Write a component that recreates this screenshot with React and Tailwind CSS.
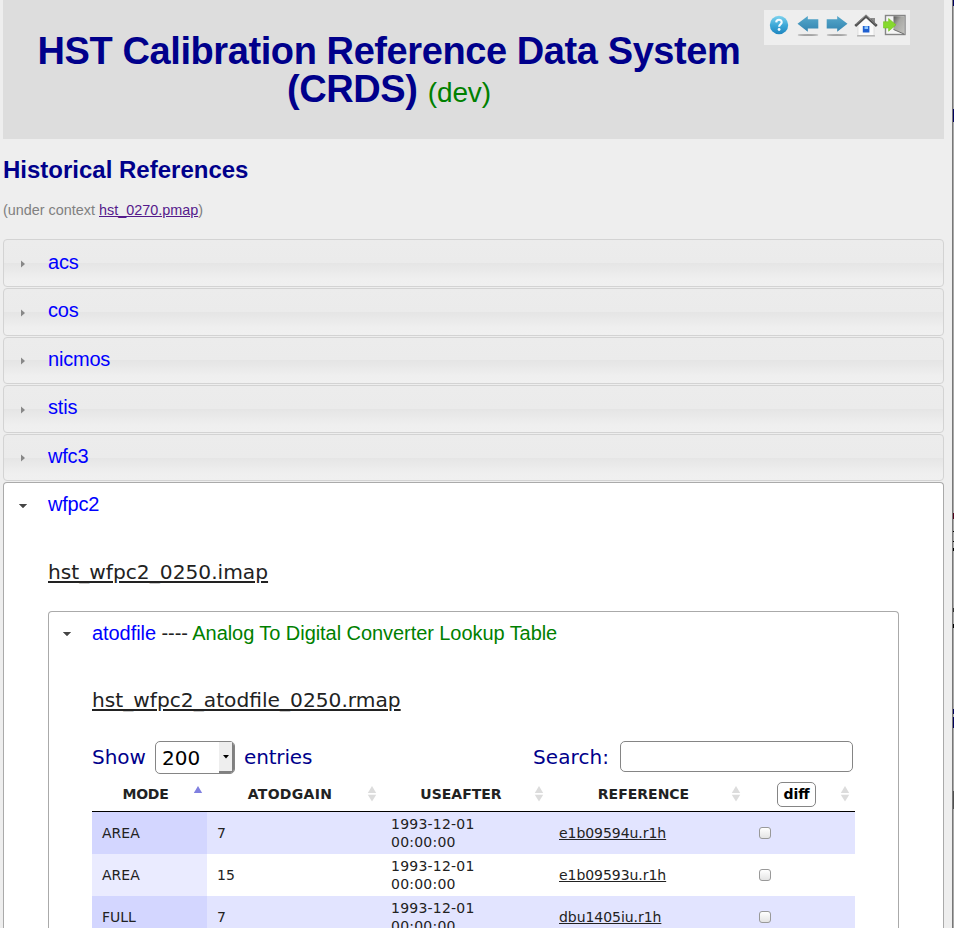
import React from 'react';

const instruments = [
  { name: 'acs', box: 'h-[48px] mb-px', icon: 'mt-[20px]', text: 'mt-[11px]' },
  { name: 'cos', box: 'h-[48px] mb-px', icon: 'mt-[20px]', text: 'mt-[10px]' },
  { name: 'nicmos', box: 'h-[47px] mb-px', icon: 'mt-[19px]', text: 'mt-[10px]' },
  { name: 'stis', box: 'h-[48px] mb-px', icon: 'mt-[20px]', text: 'mt-[10px]' },
  { name: 'wfc3', box: 'h-[47px] mb-px', icon: 'mt-[19px]', text: 'mt-[10px]' },
];

const rows = [
  { mode: 'AREA', gain: '7', file: 'e1b09594u.r1h' },
  { mode: 'AREA', gain: '15', file: 'e1b09593u.r1h' },
  { mode: 'FULL', gain: '7', file: 'dbu1405iu.r1h' },
];

const helv = "font-['Liberation_Sans',Arial,sans-serif]";
const verd = "font-['DejaVu_Sans',Verdana,sans-serif]";

function HelpIcon() {
  return (
    <svg width="20" height="20" viewBox="0 0 20 20">
      <defs>
        <linearGradient id="help" x1="0" y1="0" x2="0" y2="1">
          <stop offset="0" stopColor="#7fd3ee" />
          <stop offset=".5" stopColor="#3fa9d8" />
          <stop offset="1" stopColor="#1f86c0" />
        </linearGradient>
      </defs>
      <circle cx="10" cy="10" r="9.2" fill="url(#help)" />
      <path d="M7.2 7.4C7.3 3.9 12.7 3.9 12.7 7.2C12.7 9.2 10.2 9.2 10.1 11.8" fill="none" stroke="#f4fbff" strokeWidth="2.1" />
      <circle cx="10.1" cy="14.5" r="1.4" fill="#f4fbff" />
    </svg>
  );
}

function ArrowIcon({ flip }) {
  return (
    <svg width="22" height="22" viewBox="0 0 22 22" className={flip ? '-scale-x-100' : ''}>
      <defs>
        <linearGradient id="arrow" x1="0" y1="0" x2="0" y2="1">
          <stop offset="0" stopColor="#56a8cb" />
          <stop offset="1" stopColor="#3384b0" />
        </linearGradient>
      </defs>
      <path d="M.5 8.8L10.8 1V4.2H21.3V13.5H10.8V16.8Z" fill="url(#arrow)" />
      <ellipse cx="11" cy="20" rx="10.3" ry="1" fill="#a4a4a4" />
    </svg>
  );
}

function HomeIcon() {
  return (
    <svg width="24" height="23" viewBox="0 0 24 23">
      <rect x="16.5" y="4" width="4.5" height="5" fill="#8a8a8a" />
      <path d="M4 11L12 3.5L20 11V21.5H4Z" fill="#fafafa" stroke="#d5d5d5" strokeWidth=".7" />
      <path d="M3 21.9H21" stroke="#8a8a8a" strokeWidth=".8" />
      <path d="M1.2 12L12 2.2L22.8 12" fill="none" stroke="#505050" strokeWidth="2.6" />
      <path d="M1.8 10.4L12 1.3L22 10.4" fill="none" stroke="#9a9a9a" strokeWidth=".8" />
      <rect x="8.8" y="12" width="6.6" height="6.5" fill="#1f5fd0" />
      <path d="M10.5 12.3H14V15H10.5Z" fill="#8cc8ff" />
    </svg>
  );
}

function ExitIcon() {
  return (
    <svg width="23" height="22" viewBox="0 0 23 22">
      <defs>
        <linearGradient id="door" x1="0" y1="0" x2="1" y2="1">
          <stop offset="0" stopColor="#555" />
          <stop offset=".4" stopColor="#a8a8a4" />
          <stop offset="1" stopColor="#c2c2be" />
        </linearGradient>
      </defs>
      <rect x="2.5" y="1.5" width="19.5" height="19" fill="#f5f5f5" stroke="#858585" strokeWidth="1.4" />
      <path d="M10.5 2.2H21.3V20L10.5 15.5Z" fill="url(#door)" />
      <path d="M10.5 15.5L21 20" stroke="#555" strokeWidth=".8" />
      <path d="M.5 7.7H5.6V4.5L13 10.8L5.6 17.2V14H.5Z" fill="#86d92e" stroke="#73c51f" strokeWidth=".6" />
    </svg>
  );
}

function Triangle({ open }) {
  return open ? (
    <svg width="8" height="4" viewBox="0 0 8 4"><path d="M.3 0H7.7V1H6.7V2H5.7V3H4.7V4H3.3V3H2.3V2H1.3V1H.3Z" fill="#454545" /></svg>
  ) : (
    <svg width="4" height="8" viewBox="0 0 4 8"><path d="M0 .5L4 4L0 7.5Z" fill="#888" /></svg>
  );
}

function SortIcon({ active }) {
  return (
    <svg width="10" height="16" viewBox="0 0 10 16" className="block shrink-0">
      <path d="M5 0L9.2 7H.8Z" fill={active ? '#8080e0' : '#dcdcdc'} />
      {!active && <path d="M.8 8.8H9.2L5 15.5Z" fill="#dcdcdc" />}
    </svg>
  );
}

const cols = 'grid grid-cols-[115px_174px_168px_197px_109px]';

export default function App() {
  return (
    <div className={`flex h-[928px] w-[954px] overflow-hidden bg-[#eee] ${helv}`}>
      <div className="ml-[3px] flex h-[928px] w-[941px] shrink-0 flex-col">
        <header className="flex h-[139px] shrink-0 bg-[#ddd]">
          <h1 className="w-[761px] whitespace-nowrap pl-[11px] pt-[32px] text-center text-[38px] font-bold leading-[38px] text-[#00008b]">
            <div className="tracking-[-0.41px]">HST Calibration Reference Data System</div>
            <div className="tracking-[-0.41px]">(CRDS) <span className="text-[28px] font-normal tracking-[-0.1px] text-[#008000]">(dev)</span></div>
          </h1>
          <nav className="mt-[10px] flex h-[35px] w-[146px] bg-[#eee]">
            <span className="ml-[5px] mt-[5px]"><HelpIcon /></span>
            <span className="ml-[8px] mt-[5px]"><ArrowIcon /></span>
            <span className="ml-[7px] mt-[5px]"><ArrowIcon flip /></span>
            <span className="ml-[6px] mt-[4px]"><HomeIcon /></span>
            <span className="ml-[5px] mt-[4px]"><ExitIcon /></span>
          </nav>
        </header>
        <h2 className="h-[60px] shrink-0 whitespace-nowrap pt-[17px] text-[24px] font-bold leading-[28px] text-[#00008b]">Historical References</h2>
        <p className="h-[40px] shrink-0 whitespace-nowrap pt-[3px] text-[14.4px] leading-[16px] text-[#808080]">
          (under context <a className="text-[#551a8b] underline">hst_0270.pmap</a>)
        </p>
        {instruments.map((it) => (
          <div key={it.name} className={`flex shrink-0 rounded-[4px] border border-[#d3d3d3] bg-[linear-gradient(#ececec_0%,#ebebeb_50%,#e5e5e5_50%,#efefef_84%,#f0f0f0_100%)] ${it.box}`}>
            <span className={`ml-[17px] w-[27px] ${it.icon}`}><Triangle /></span>
            <span className={`text-[20px] leading-[23px] tracking-[-0.2px] text-[#0000ff] ${it.text}`}>{it.name}</span>
          </div>
        ))}
        <section className="flex h-[446px] shrink-0 flex-col rounded-t-[4px] border border-b-0 border-[#aaa] bg-white">
          <div className="flex h-[74px] shrink-0">
            <span className="ml-[15px] mt-[21px] w-[29px]"><Triangle open /></span>
            <span className="mt-[10px] text-[20px] leading-[23px] tracking-[-0.2px] text-[#0000ff]">wfpc2</span>
          </div>
          <a className={`ml-[44px] h-[54px] shrink-0 whitespace-nowrap text-[20.2px] leading-[30px] text-[#222] underline ${verd}`}>hst_wfpc2_0250.imap</a>
          <div className="ml-[44px] flex h-[317px] w-[851px] shrink-0 flex-col overflow-hidden rounded-t-[4px] border border-b-0 border-[#aaa]">
            <div className="flex h-[73px] shrink-0">
              <span className="ml-[14px] mt-[20px] w-[29px]"><Triangle open /></span>
              <span className="mt-[10px] whitespace-nowrap text-[20px] leading-[23px] tracking-[-0.06px] text-[#222]">
                <span className="text-[#0000ff]">atodfile</span> ---- <span className="text-[#008000]">Analog To Digital Converter Lookup Table</span>
              </span>
            </div>
            <a className={`ml-[43px] h-[56px] shrink-0 whitespace-nowrap text-[20.2px] leading-[30px] text-[#222] underline ${verd}`}>hst_wfpc2_atodfile_0250.rmap</a>
            <div className={`ml-[43px] flex h-[36px] w-[763px] shrink-0 text-[20px] leading-[32px] text-[#00008b] ${verd}`}>
              <span className="w-[63px] whitespace-nowrap">Show</span>
              <div className="flex h-[33px] w-[80px] overflow-hidden rounded-[5px] border border-[#858585] bg-white text-black">
                <span className="w-[63px] pl-[6px]">200</span>
                <span className="flex h-[31px] flex-1 items-center justify-center border-b-2 border-r-2 border-[#808080] bg-[#eee]">
                  <svg width="6" height="4" viewBox="0 0 6 4"><path d="M0 0H6L3 3.6Z" /></svg>
                </span>
              </div>
              <span className="ml-[9px] w-[289px] tracking-[-0.15px]">entries</span>
              <span className="w-[87px] whitespace-nowrap tracking-[0.1px]">Search:</span>
              <div className="h-[31px] w-[233px] rounded-[5px] border border-[#858585] bg-white" />
            </div>
            <div className={`ml-[43px] w-[763px] text-[14px] text-[#222] ${verd}`}>
              <div className={`${cols} h-[35px] border-b border-black font-bold [&>div]:h-[34px]`}>
                <div className="flex items-center"><span className="w-[101px] pl-[6px] text-center tracking-[-0.3px]">MODE</span><span className="mb-px"><SortIcon active /></span></div>
                <div className="flex items-center"><span className="w-[160px] pl-[6px] text-center tracking-[0.3px]">ATODGAIN</span><SortIcon /></div>
                <div className="flex items-center"><span className="w-[153px] pl-[7px] text-center">USEAFTER</span><SortIcon /></div>
                <div className="flex items-center"><span className="w-[182px] pl-[7px] text-center">REFERENCE</span><SortIcon /></div>
                <div className="flex items-center pl-[31px]">
                  <span className="flex h-[25px] w-[39px] items-center justify-center rounded-[5px] border border-[#858585] text-black">diff</span>
                  <span className="ml-[24px]"><SortIcon /></span>
                </div>
              </div>
              {rows.map((r, i) => (
                <div key={i} className={`${cols} h-[42px] items-center leading-[18px] ${i % 2 ? 'bg-white' : 'bg-[#e2e4ff]'}`}>
                  <div className={`flex h-[42px] items-center pl-[10px] ${i % 2 ? 'bg-[#eaebff]' : 'bg-[#d3d6ff]'}`}>{r.mode}</div>
                  <div className="pl-[10px]">{r.gain}</div>
                  <div className="pl-[10px] tracking-[0.22px]">1993-12-01<br />00:00:00</div>
                  <div className="pl-[10px] tracking-[-0.05px]"><a className="underline">{r.file}</a></div>
                  <div className="pl-[13px]"><div className="h-[12px] w-[12px] rounded-[3px] border border-[#999] bg-linear-to-b from-white to-[#e4e4e4]" /></div>
                </div>
              ))}
            </div>
          </div>
        </section>
      </div>
      <aside className="ml-[8px] flex w-[2px] shrink-0 flex-col border-l border-[#777] bg-[#aaa]">
        <div className="h-[6px] bg-[#000060]" />
        <div className="mt-[103px] h-[13px] bg-[#000060]" />
        <div className="mt-[391px] h-[6px] bg-[#500018]" />
        <div className="mt-[12px] h-px bg-black" />
        <div className="mt-[9px] h-px bg-black" />
        <div className="mt-[6px] h-[3px] bg-black" />
        <div className="mt-[57px] h-[4px] bg-[#333]" />
        <div className="mt-[12px] h-[4px] bg-black" />
        <div className="mt-[81px] h-[5px] bg-[#00005c]" />
        <div className="mt-[3px] h-[11px] bg-[#00005c]" />
        <div className="mt-[63px] h-[18px] bg-[#505050]" />
      </aside>
    </div>
  );
}
